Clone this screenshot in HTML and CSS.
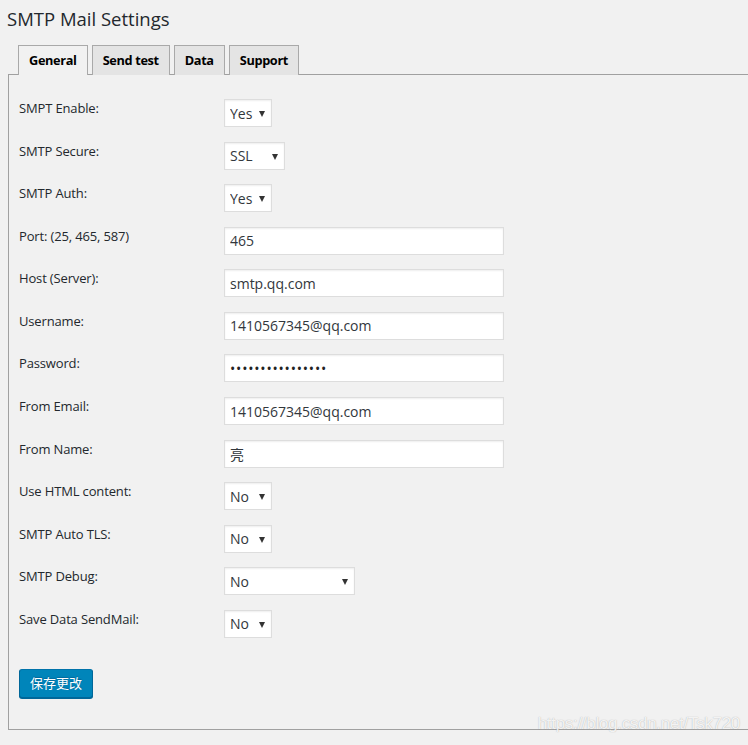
FILE: index.html
```html
<!DOCTYPE html>
<html lang="zh-CN">
<head>
<meta charset="utf-8">
<title>SMTP Mail Settings</title>
<link rel="stylesheet" href="styles.css">
</head>
<body>
<div class="wrap">
  <h1 class="title">SMTP Mail Settings</h1>
  <nav class="tabs">
    <span class="tab active">General</span>
    <span class="tab">Send test</span>
    <span class="tab">Data</span>
    <span class="tab">Support</span>
  </nav>
  <div class="panel">
    <form class="form">
      <div class="row"><label class="lbl">SMPT Enable:</label><span class="sel w48"><select><option>Yes</option></select></span></div>
      <div class="row"><label class="lbl">SMTP Secure:</label><span class="sel w61"><select><option>SSL</option></select></span></div>
      <div class="row"><label class="lbl">SMTP Auth:</label><span class="sel w48"><select><option>Yes</option></select></span></div>
      <div class="row"><label class="lbl">Port: (25, 465, 587)</label><input class="txt" type="text" value="465"></div>
      <div class="row"><label class="lbl">Host (Server):</label><input class="txt" type="text" value="smtp.qq.com"></div>
      <div class="row"><label class="lbl">Username:</label><input class="txt" type="text" value="1410567345@qq.com"></div>
      <div class="row"><label class="lbl">Password:</label><input class="txt pw" type="text" value="••••••••••••••••"></div>
      <div class="row"><label class="lbl">From Email:</label><input class="txt" type="text" value="1410567345@qq.com"></div>
      <div class="row"><label class="lbl">From Name:</label><input class="txt" type="text" value="亮"></div>
      <div class="row"><label class="lbl">Use HTML content:</label><span class="sel w48"><select><option>No</option></select></span></div>
      <div class="row"><label class="lbl">SMTP Auto TLS:</label><span class="sel w48"><select><option>No</option></select></span></div>
      <div class="row"><label class="lbl">SMTP Debug:</label><span class="sel w131"><select><option>No</option></select></span></div>
      <div class="row"><label class="lbl">Save Data SendMail:</label><span class="sel w48"><select><option>No</option></select></span></div>
      <div class="actions"><button type="button" class="btn">保存更改</button></div>
    </form>
  </div>
</div>
<div class="watermark">https://blog.csdn.net/Tsk720</div>
</body>
</html>
```
FILE: styles.css
```css
html, body {
  margin: 0;
  padding: 0;
  background: #f1f1f1;
  overflow: hidden;
}
body {
  font-family: "Open Sans", "Noto Sans", "Noto Sans CJK SC", sans-serif;
  color: #23282d;
  font-size: 13px;
  height: 745px;
  position: relative;
}
.wrap {
  padding-left: 8px;
  margin-right: -20px;
}
.title {
  margin: 0;
  padding: 6px 0 0 0;
  margin-left: -1px;
  font-size: 18.5px;
  line-height: 26px;
  font-weight: 400;
  color: #23282d;
  height: 39px;
}
.tabs {
  display: flex;
  gap: 2px;
  padding-left: 10px;
  height: 29px;
  position: relative;
  z-index: 1;
}
.tab {
  display: block;
  box-sizing: border-box;
  height: 30px;
  padding: 0 10px;
  border: 1px solid #a9a9a9;
  border-bottom: none;
  background: #e4e4e4;
  font-weight: 700;
  font-size: 12.75px;
  letter-spacing: -0.35px;
  line-height: 28px;
  color: #000;
  margin-right: 2px;
}
.tab.active {
  background: #f1f1f1;
}
.panel {
  border: 1px solid #a0a0a0;
  border-right: none;
  height: 656px;
  box-sizing: border-box;
}
.form {
  padding: 24px 0 0 10px;
  display: flex;
  flex-direction: column;
  gap: 14.58px;
}
.row {
  display: flex;
  align-items: flex-start;
  height: 28px;
}
.lbl {
  width: 205px;
  flex: none;
  padding-top: 1px;
  line-height: 17px;
  font-size: 13px;
  letter-spacing: -0.15px;
  color: #23282d;
}
.sel {
  position: relative;
  display: block;
  height: 28px;
}
.sel::after {
  content: "";
  position: absolute;
  right: 7px;
  top: 12px;
  border-left: 3.5px solid transparent;
  border-right: 3.5px solid transparent;
  border-top: 6px solid #333;
  pointer-events: none;
}
.sel select {
  appearance: none;
  -webkit-appearance: none;
  box-sizing: border-box;
  width: 100%;
  height: 28px;
  margin: 0;
  padding: 0 5px;
  border: 1px solid #ddd;
  border-radius: 0;
  background: #fff;
  box-shadow: inset 0 1px 2px rgba(0,0,0,.07);
  font-family: inherit;
  font-size: 14px;
  color: #32373c;
}
.w48 { width: 48px; }
.w61 { width: 61px; }
.w131 { width: 131px; }
.txt {
  box-sizing: border-box;
  width: 280px;
  height: 28px;
  margin: 0;
  padding: 0 5px;
  border: 1px solid #ddd;
  border-radius: 0;
  background: #fff;
  box-shadow: inset 0 1px 2px rgba(0,0,0,.07);
  font-family: inherit;
  font-size: 14px;
  color: #32373c;
}
.pw {
  font-size: 14px;
  letter-spacing: 0.8px;
  color: #222;
}
.actions {
  padding-top: 16.4px;
}
.btn {
  box-sizing: border-box;
  height: 29px;
  padding: 0 10px;
  background: #0085ba;
  border: 1px solid;
  border-color: #0073aa #006799 #006799;
  border-radius: 3px;
  box-shadow: 0 1px 0 #006799;
  color: #fff;
  text-shadow: 0 -1px 1px #006799;
  font-family: "Noto Sans CJK SC", sans-serif;
  font-size: 13px;
  line-height: 26px;
}
.watermark {
  position: absolute;
  right: 8px;
  top: 714px;
  font-family: "Liberation Sans", sans-serif;
  font-size: 17px;
  color: rgba(255,255,255,.85);
  text-shadow: 0 0 1px rgba(120,120,120,.6);
  letter-spacing: -0.3px;
}
```
